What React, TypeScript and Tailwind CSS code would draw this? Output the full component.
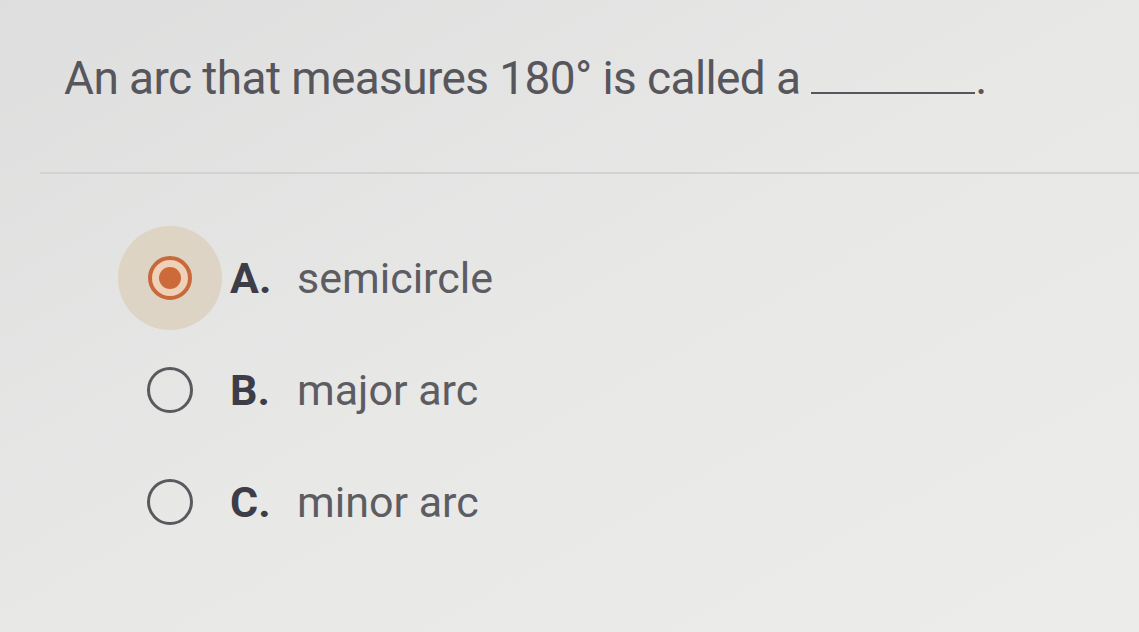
import React from 'react';

interface Choice {
  letter: string;
  text: string;
}

const choices: Choice[] = [
  { letter: 'A.', text: 'semicircle' },
  { letter: 'B.', text: 'major arc' },
  { letter: 'C.', text: 'minor arc' },
];

const Radio: React.FC<{ checked: boolean }> = ({ checked }) => {
  if (checked) {
    return (
      <div className="relative w-[48px] h-[48px] flex items-center justify-center">
        <div className="absolute -inset-[28px] rounded-full bg-[#dcd0bd]/80" />
        <div className="relative w-[44px] h-[44px] rounded-full border-[4px] border-[#c8693c] bg-[#efd0b8] flex items-center justify-center">
          <div className="w-[22px] h-[22px] rounded-full bg-[#cc6a3a]" />
        </div>
      </div>
    );
  }
  return (
    <div className="w-[48px] h-[48px] flex items-center justify-center">
      <div className="w-[46px] h-[46px] rounded-full border-[3px] border-[#5a5a5e]" />
    </div>
  );
};

export default function App() {
  const [selected, setSelected] = React.useState(0);

  return (
    <div
      className="w-[1139px] h-[632px] overflow-hidden bg-gradient-to-br from-[#dedede] via-[#e8e8e7] to-[#ececeb]"
      style={{ fontFamily: 'Roboto, "Liberation Sans", sans-serif' }}
    >
      {/* Question */}
      <div className="pl-[64px] pt-[50px] h-[172px]">
        <p className="text-[46px] leading-[56px] text-[#56565c] tracking-[-0.6px]">
          An arc that measures 180° is called a{' '}
          <span className="inline-block w-[164px] border-b-[2px] border-[#56565c] align-baseline" />
          .
        </p>
      </div>

      <div className="ml-[40px] h-[2px] bg-[#d2d2d2]" />

      {/* Options */}
      <div className="pl-[146px] pt-[80px] flex flex-col gap-[64px]">
        {choices.map((c, i) => (
          <button
            key={c.letter}
            onClick={() => setSelected(i)}
            className="flex items-center text-left"
          >
            <Radio checked={selected === i} />
            <span className="ml-[36px] w-[67px] text-[43px] leading-[48px] font-bold text-[#3d3d48]">{c.letter}</span>
            <span className="text-[43px] leading-[48px] text-[#5c5c62]">{c.text}</span>
          </button>
        ))}
      </div>
    </div>
  );
}
